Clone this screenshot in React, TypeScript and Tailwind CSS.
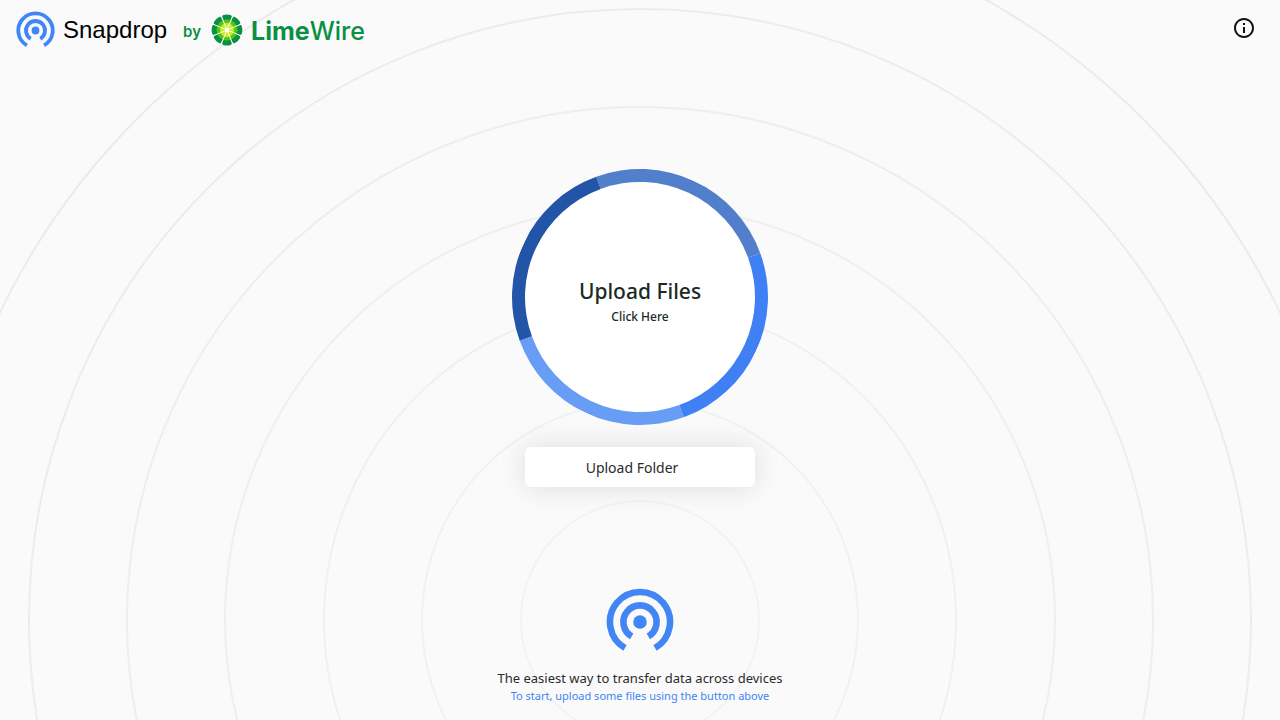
import React from 'react';

const rings = [
    { r: 119, color: '#f3f3f3' },
    { r: 218, color: '#f1f1f1' },
    { r: 316, color: '#f0f0f0' },
    { r: 415, color: '#efefef' },
    { r: 513, color: '#eeeeee' },
    { r: 611, color: '#ececec' },
    { r: 710, color: '#ebebeb' },
];

const petals = [0, 45, 90, 135, 180, 225, 270, 315];

const Rings = () => {
    return (
        <svg
            className="absolute inset-0 -z-10 h-full w-full"
            viewBox="0 0 1280 720"
            preserveAspectRatio="xMidYMax slice"
            fill="none"
            strokeWidth="2"
            aria-hidden="true"
        >
            {rings.map((ring) => (
                <circle key={ring.r} cx="640" cy="620" r={ring.r} stroke={ring.color} />
            ))}
        </svg>
    );
};

const SnapdropIcon = ({ className }: { className: string }) => {
    return (
        <svg className={className} viewBox="0 0 68 68" fill="none" stroke="#4285f4" strokeWidth="6.6" aria-hidden="true">
            <path d="M19 60A30 30 0 1 1 49 60" />
            <path d="M25.7 48.4A16.6 16.6 0 1 1 42.3 48.4" />
            <circle cx="34" cy="34" r="6.8" fill="#4285f4" stroke="none" />
        </svg>
    );
};

const LimeIcon = () => {
    return (
        <svg className="size-8" viewBox="0 0 32 32" aria-hidden="true">
            {petals.map((angle) => (
                <g key={angle} transform={`rotate(${angle} 16 16)`}>
                    <path d="M16 16L11.2 3.8Q10.6 1.6 12.4 1.1Q16 0 19.6 1.1Q21.4 1.6 20.8 3.8Z" fill="#08913f" />
                    <path d="M16 16L12.3 6.6Q16 4.4 19.7 6.6Z" fill="#4fc41d" />
                    <path d="M16 16L13.2 9.6Q16 8 18.8 9.6Z" fill="#c8ea16" />
                </g>
            ))}
            <g stroke="#fbfdf0" strokeWidth="1">
                {petals.map((angle) => (
                    <path key={angle} d="M16 16V2" transform={`rotate(${angle + 22.5} 16 16)`} />
                ))}
            </g>
            <circle cx="16" cy="16" r="2.2" fill="#fffff0" />
        </svg>
    );
};

const Header = () => {
    return (
        <header className="flex h-15 items-center justify-between pl-4 pr-6">
            <div className="flex items-center">
                <SnapdropIcon className="size-[39px]" />
                <h1 className="ml-2 font-['Liberation_Sans',sans-serif] text-2xl text-black">Snapdrop</h1>
                <a href="#limewire" className="ml-4 flex items-center font-['Inter',sans-serif] text-[#0a8f43]">
                    <span className="pt-1 text-[15px] font-semibold">by</span>
                    <span className="ml-2.5">
                        <LimeIcon />
                    </span>
                    <span className="ml-2 pt-1 text-[25px] font-medium">
                        <b className="font-bold">Lime</b>Wire
                    </span>
                </a>
            </div>
            <button type="button" aria-label="About Snapdrop" className="mb-1">
                <svg className="size-6" viewBox="0 0 24 24" fill="#121212">
                    <path d="M11 17h2v-6h-2v6zm1-15C6.48 2 2 6.48 2 12s4.48 10 10 10 10-4.48 10-10S17.52 2 12 2zm0 18c-4.41 0-8-3.59-8-8s3.59-8 8-8 8 3.59 8 8-3.59 8-8 8zM11 9h2V7h-2v2z" />
                </svg>
            </button>
        </header>
    );
};

export default function App() {
    return (
        <div className="relative isolate flex min-h-screen flex-col overflow-hidden bg-[#fafafa] font-['Noto_Sans','Open_Sans',sans-serif] text-[#2b2b2b]">
            <Rings />
            <Header />
            <main className="flex flex-1 flex-col items-center justify-center pt-2">
                <button
                    type="button"
                    className="relative flex size-64 flex-col items-center justify-center rounded-full bg-white pt-3 text-[#1c2a1f]"
                >
                    <span className="absolute inset-0 rotate-25 rounded-full border-13 border-t-[#517fcb] border-r-[#3f81f5] border-b-[#689df5] border-l-[#2254a8]" />
                    <span className="text-[21px] leading-7 font-medium">Upload Files</span>
                    <span className="text-xs leading-6 font-medium">Click Here</span>
                </button>
                <button
                    type="button"
                    className="mt-5.5 h-10 w-[230px] rounded-md bg-white pt-0.5 pr-4 text-sm shadow-[0_0_28px_rgba(0,0,0,0.12)]"
                >
                    Upload Folder
                </button>
            </main>
            <footer className="flex flex-col items-center pb-4 text-center">
                <SnapdropIcon className="size-17" />
                <p className="mt-3 text-[13px] leading-5">The easiest way to transfer data across devices</p>
                <p className="text-[11px] leading-4 text-[#4285f4]">To start, upload some files using the button above</p>
            </footer>
        </div>
    );
}
